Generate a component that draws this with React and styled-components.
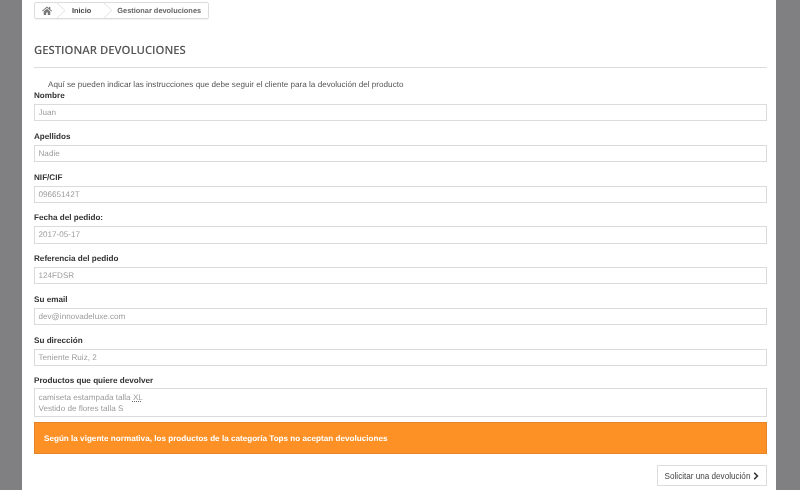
import React from "react";
import styled, { createGlobalStyle } from "styled-components";

const Global = createGlobalStyle`
  html, body { margin: 0; padding: 0; background: #808080; }
  body {
    font-family: "Liberation Sans", Arial, sans-serif;
    text-rendering: geometricPrecision;
  }
`;

const Page = styled.div`
  width: 800px;
  height: 490px;
  overflow: hidden;
  box-sizing: border-box;
  padding: 0 24px 0 22px;
  background: #808082;
  filter: blur(0.35px);
`;

const Sheet = styled.main`
  height: 490px;
  box-sizing: border-box;
  background: #fff;
  padding: 2px 9px 0 12px;
`;

const Crumbs = styled.nav`
  display: inline-flex;
  align-items: center;
  height: 17px;
  box-sizing: border-box;
  border: 1px solid #dcdcdc;
  border-radius: 2px;
  box-shadow: 0 1px 1px rgba(0, 0, 0, 0.05);
  font-size: 7.4px;
  font-weight: 700;
  overflow: hidden;
  vertical-align: top;
`;

const Crumb = styled.span`
  display: flex;
  align-items: center;
  height: 15px;
  padding: ${(p) => p.$pad};
  color: ${(p) => p.$color || "#555"};
`;

const Chevron = styled.svg`
  width: 12px;
  height: 15px;
  flex: none;
`;

const Title = styled.h1`
  margin: 22px 0 0;
  height: 25px;
  line-height: 18px;
  font-family: "Open Sans", sans-serif;
  font-size: 11.3px;
  font-weight: 600;
  color: #555454;
  border-bottom: 1px solid #dcdcdc;
`;

const Intro = styled.p`
  margin: 12px 0 0;
  padding-left: 14px;
  font-size: 8.15px;
  line-height: 10px;
  color: #555;
`;

const Form = styled.form`
  display: flex;
  flex-direction: column;
`;

const Field = styled.div`
  display: flex;
  flex-direction: column;
  height: ${(p) => p.$h || "40.75px"};
`;

const Label = styled.label`
  height: ${(p) => p.$h || "14px"};
  line-height: 12px;
  font-size: 8.15px;
  font-weight: 700;
  color: #333;
`;

const Input = styled.div`
  height: 17.25px;
  box-sizing: border-box;
  border: 1px solid #dbdbdb;
  padding: 0 3.5px;
  line-height: 15.5px;
  font-size: 8.15px;
  color: #9c9c9c;
`;

const Area = styled(Input)`
  height: 29px;
  padding-top: 2.5px;
  line-height: 11px;
`;

const Squiggle = styled.span`
  text-decoration: underline dotted #666 1px;
  text-underline-offset: 0.5px;
`;

const Alert = styled.div`
  height: 32px;
  margin-top: 5px;
  box-sizing: border-box;
  background: #fe9126;
  border: 1px solid #e4852a;
  padding: 0 9px;
  line-height: 31px;
  font-size: 8.15px;
  font-weight: 700;
  color: #fff;
`;

const Actions = styled.div`
  display: flex;
  justify-content: flex-end;
  margin-top: 11px;
`;

const Button = styled.button`
  display: flex;
  align-items: center;
  gap: 3px;
  height: 21px;
  width: 110px;
  box-sizing: border-box;
  justify-content: center;
  border: 1px solid #dcdcdc;
  border-radius: 0;
  background: #fff;
  font-family: inherit;
  font-size: 8.15px;
  color: #444;
  padding: 1px 0 0;
`;

const fields = [
  ["Nombre", "Juan"],
  ["Apellidos", "Nadie"],
  ["NIF/CIF", "09665142T"],
  ["Fecha del pedido:", "2017-05-17"],
  ["Referencia del pedido", "124FDSR"],
  ["Su email", "dev@innovadeluxe.com"],
  ["Su dirección", "Teniente Ruiz, 2"],
];

const Sep = () => (
  <Chevron viewBox="0 0 12 15" aria-hidden="true">
    <path d="M1 -1 L10 7.5 L1 16" fill="none" stroke="#e2e2e2" strokeWidth="1" />
  </Chevron>
);

export default function App() {
  return (
    <Page>
      <Global />
      <Sheet>
        <Crumbs>
          <Crumb $pad="0 3px 0 7px" $color="#777">
            <svg width="10" height="9" viewBox="0 0 20 18" aria-hidden="true">
              <path fill="#777" d="M10 1 0 9.6l1.2 1.4L10 3.5l8.8 7.5L20 9.6 16.5 6.6V2h-2.6v2.4zM3.5 11.2V18h4.8v-5h3.4v5h4.8v-6.8L10 5.6z" />
            </svg>
          </Crumb>
          <Sep />
          <Crumb $pad="0 11px 0 5px" $color="#444">Inicio</Crumb>
          <Sep />
          <Crumb $pad="0 7px 0 3px" $color="#666">Gestionar devoluciones</Crumb>
        </Crumbs>
        <Title>GESTIONAR DEVOLUCIONES</Title>
        <Intro>Aquí se pueden indicar las instrucciones que debe seguir el cliente para la devolución del producto</Intro>
        <Form>
          {fields.map(([label, value]) => (
            <Field key={label}>
              <Label>{label}</Label>
              <Input>{value}</Input>
            </Field>
          ))}
          <Field $h="auto">
            <Label $h="13px">Productos que quiere devolver</Label>
            <Area>
              camiseta estampada talla <Squiggle>XL</Squiggle>
              <br />
              Vestido de flores talla S
            </Area>
          </Field>
          <Alert>Según la vigente normativa, los productos de la categoría Tops no aceptan devoluciones</Alert>
          <Actions>
            <Button type="button">
              Solicitar una devolución
              <svg width="6" height="8" viewBox="0 0 6 8" aria-hidden="true">
                <path d="M1.2 0.8 4.4 4 1.2 7.2" fill="none" stroke="#333" strokeWidth="1.6" />
              </svg>
            </Button>
          </Actions>
        </Form>
      </Sheet>
    </Page>
  );
}
